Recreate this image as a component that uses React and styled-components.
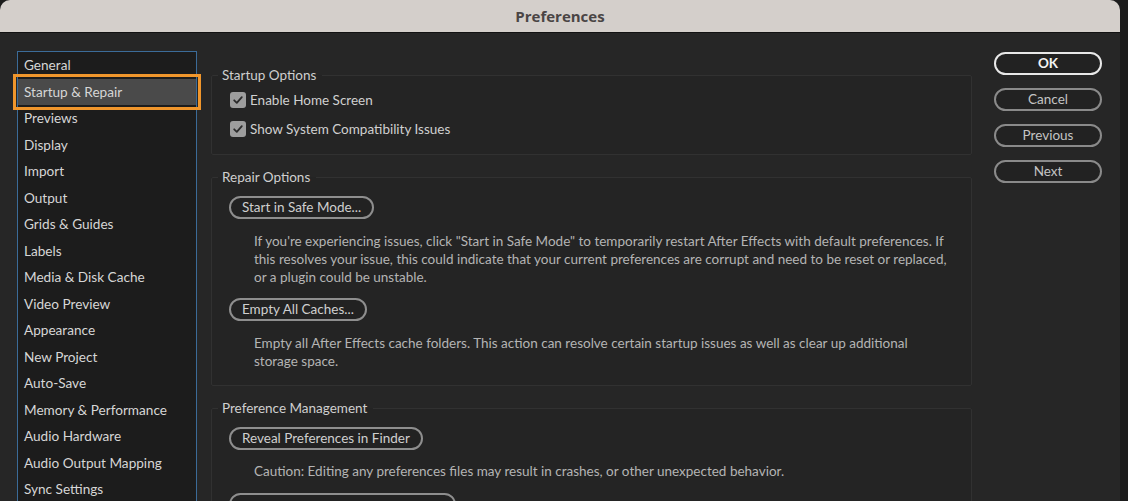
import React from 'react'
import styled, { createGlobalStyle } from 'styled-components'

const GlobalStyle = createGlobalStyle`
  html, body {
    margin: 0;
    padding: 0;
    height: 100%;
    overflow: hidden;
    background: #1c1c1c;
  }
  #root {
    height: 100vh;
  }
`

const Window = styled.div`
  width: 1120px;
  height: 100vh;
  display: flex;
  flex-direction: column;
  background: #262626;
  border-radius: 10px 10px 0 0;
  overflow: hidden;
  font-family: Lato, "Open Sans", sans-serif;
`

const TitleBar = styled.div`
  height: 32px;
  flex: none;
  background: #d4cfcb;
  border-bottom: 1px solid #121212;
  display: flex;
  align-items: center;
  justify-content: center;
  color: #4a4545;
  font-family: "Open Sans", sans-serif;
  font-weight: 700;
  font-size: 15px;
`

const Body = styled.div`
  flex: 1;
  display: grid;
  grid-template-columns: 180px 761px 130px;
  column-gap: 14px;
  padding: 18px 0 0 17px;
  align-items: start;
`

const NavList = styled.ul`
  margin: 0;
  padding: 0;
  list-style: none;
  background: #1c1c1c;
  border: 1px solid #3b6b98;
  border-bottom: none;
  height: 500px;
`

const NavItem = styled.li`
  height: 26.5px;
  line-height: 26.5px;
  padding-left: 6px;
  font-size: 13.6px;
  color: #d6d6d6;
  white-space: nowrap;
  background: ${p => (p.$active ? '#4a4a4a' : 'transparent')};
  outline: ${p => (p.$active ? '3px solid #f0962c' : 'none')};
  outline-offset: 2px;
`

const Content = styled.div`
  display: flex;
  flex-direction: column;
  gap: 14px;
  margin-top: 16px;
`

const Group = styled.fieldset`
  margin: 0;
  padding: 0 17px ${p => p.$bottom}px 17px;
  border: 1px solid #313131;
  border-radius: 2px;
  background: #242424;
  display: flex;
  flex-direction: column;
  align-items: flex-start;
`

const GroupTitle = styled.legend`
  padding: 0 6px 0 4px;
  margin-left: -11px;
  font-size: 13.5px;
  line-height: 16px;
  color: #cfcfcf;
`

const CheckRow = styled.label`
  display: flex;
  align-items: center;
  gap: 4px;
  height: 22px;
  margin-top: ${p => p.$top}px;
  font-size: 13.5px;
  color: #d0d0d0;
  margin-left: 1px;
`

const Box = styled.span`
  width: 16px;
  height: 16px;
  border-radius: 3px;
  background: #9d9d9d;
  display: flex;
  align-items: center;
  justify-content: center;
`

const PillButton = styled.button`
  height: 23px;
  margin-top: ${p => p.$top}px;
  padding: 0 11px;
  border-radius: 12px;
  border: 2px solid #8e8e8e;
  background: #222222;
  color: #cfcfcf;
  font-family: inherit;
  font-size: 13.5px;
  line-height: 19px;
  white-space: nowrap;
  width: ${p => (p.$width ? p.$width + 'px' : 'auto')};
`

const Note = styled.p`
  margin: ${p => p.$top}px 0 0 25px;
  font-size: 13.5px;
  line-height: 18px;
  color: #b4b4b4;
  max-width: 700px;
`

const Actions = styled.div`
  display: flex;
  flex-direction: column;
  gap: 13px;
  width: 108px;
  padding-top: 1px;
  margin-left: 8px;
`

const ActionButton = styled.button`
  height: 23px;
  border-radius: 12px;
  border: 2px solid ${p => (p.$primary ? '#e8e8e8' : '#8a8a8a')};
  background: #222222;
  color: ${p => (p.$primary ? '#f2f2f2' : '#c4c4c4')};
  font-family: inherit;
  font-weight: ${p => (p.$primary ? 700 : 400)};
  font-size: 13.5px;
  line-height: 19px;
  padding: 0;
`

const Check = () => (
  <svg width="12" height="12" viewBox="0 0 12 12">
    <path d="M2.2 6.3 L4.8 8.8 L9.8 3.2" fill="none" stroke="#2b2b2b" strokeWidth="1.8" strokeLinecap="round" strokeLinejoin="round" />
  </svg>
)

const sections = [
  'General', 'Startup & Repair', 'Previews', 'Display', 'Import', 'Output',
  'Grids & Guides', 'Labels', 'Media & Disk Cache', 'Video Preview', 'Appearance',
  'New Project', 'Auto-Save', 'Memory & Performance', 'Audio Hardware',
  'Audio Output Mapping', 'Sync Settings'
]

export default function App() {
  return (
    <>
      <GlobalStyle />
      <Window>
        <TitleBar>Preferences</TitleBar>
        <Body>
          <NavList>
            {sections.map(name => (
              <NavItem key={name} $active={name === 'Startup & Repair'}>{name}</NavItem>
            ))}
          </NavList>

          <Content>
            <Group $bottom={14}>
              <GroupTitle>Startup Options</GroupTitle>
              <CheckRow $top={6}><Box><Check /></Box>Enable Home Screen</CheckRow>
              <CheckRow $top={7}><Box><Check /></Box>Show System Compatibility Issues</CheckRow>
            </Group>

            <Group $bottom={15}>
              <GroupTitle>Repair Options</GroupTitle>
              <PillButton $top={11}>Start in Safe Mode...</PillButton>
              <Note $top={13}>
                If you're experiencing issues, click "Start in Safe Mode" to temporarily restart After Effects with default preferences. If
                this resolves your issue, this could indicate that your current preferences are corrupt and need to be reset or replaced,
                or a plugin could be unstable.
              </Note>
              <PillButton $top={12}>Empty All Caches...</PillButton>
              <Note $top={13}>
                Empty all After Effects cache folders. This action can resolve certain startup issues as well as clear up additional
                storage space.
              </Note>
            </Group>

            <Group $bottom={16}>
              <GroupTitle>Preference Management</GroupTitle>
              <PillButton $top={11}>Reveal Preferences in Finder</PillButton>
              <Note $top={12}>Caution: Editing any preferences files may result in crashes, or other unexpected behavior.</Note>
              <PillButton $top={13} $width={227} aria-label="More" />
            </Group>
          </Content>

          <Actions>
            <ActionButton $primary>OK</ActionButton>
            <ActionButton>Cancel</ActionButton>
            <ActionButton>Previous</ActionButton>
            <ActionButton>Next</ActionButton>
          </Actions>
        </Body>
      </Window>
    </>
  )
}
